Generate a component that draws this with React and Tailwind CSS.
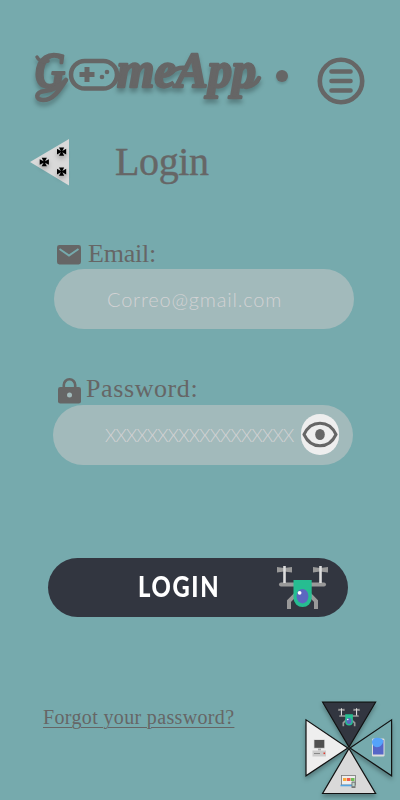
const SERIF = "font-['Liberation_Serif',serif] text-[#666666] whitespace-nowrap";

function Logo() {
  return (
    <svg width="264" height="76" viewBox="30 38 264 76" className="block shrink-0 overflow-visible" fill="#666">
      <g
        className="font-['Liberation_Serif',serif] font-bold italic [filter:drop-shadow(0_4px_2px_rgba(0,0,0,0.25))]"
        stroke="#666"
        strokeWidth="2.400"
        strokeLinejoin="round"
      >
        <text x="35" y="87" fontSize="50" textLength="30" lengthAdjust="spacingAndGlyphs">G</text>
        <text x="117" y="87" fontSize="50" textLength="139" lengthAdjust="spacingAndGlyphs">meApp</text>
        <g fill="none" strokeWidth="4.500" strokeLinecap="round">
          <path d="M66 80C59 91 53 100 43 100 35 100 35 92 45 91 53 90 61 86 66 80" />
          <path d="M37 57Q40 63 48 61" strokeWidth="3.500" />
          <path d="M172 72Q177 67 186 68" />
          <path d="M246 87Q256 85 259 78" />
        </g>
      </g>
      <rect x="71" y="61" width="46" height="27.500" rx="13.750" fill="none" stroke="#666" strokeWidth="4.500" />
      <path d="M84.500 67h5v5h5v5h-5v5h-5v-5h-5v-5h5z" />
      <circle cx="102" cy="77" r="2.300" />
      <circle cx="107" cy="72" r="2.300" />
      <circle cx="282" cy="76" r="6" className="[filter:drop-shadow(0_2px_1px_rgba(0,0,0,0.15))]" />
    </svg>
  );
}

function MenuIcon() {
  return (
    <svg width="48" height="48" viewBox="0 0 48 48" fill="none" stroke="#666" className="block shrink-0">
      <circle cx="24" cy="24" r="21.200" strokeWidth="4.600" />
      <path d="M14.500 14.500h19M14.500 24h19M14.500 33.500h19" strokeWidth="4.600" strokeLinecap="round" />
    </svg>
  );
}

function Cross({ x, y }) {
  return (
    <path
      transform={`translate(${x} ${y})`}
      d="M-2.600-4.200h5.200L.7-.7 4.600-2.800v5.600L.7.7 2.600 4.200h-5.200L-.7.7-4.600 2.800v-5.600L-.7-.7z"
      fill="#000"
    />
  );
}

function BackIcon() {
  return (
    <svg width="40" height="48" viewBox="30 138 40 48" className="block shrink-0 overflow-visible">
      <path d="M30 162 69 139v46.500z" fill="#d9d9d9" />
      <g className="[filter:drop-shadow(0_3px_2px_rgba(0,0,0,0.25))]">
        <Cross x={44.300} y={162} />
        <Cross x={61.600} y={151.600} />
        <Cross x={61.600} y={171.600} />
      </g>
    </svg>
  );
}

function DroneShape() {
  return (
    <g>
      <path d="M296 593 289 600v6M309 593l7 7v6" fill="none" stroke="#999" strokeWidth="4" strokeLinecap="square" />
      <path d="M281 583.500h43" stroke="#999" strokeWidth="4" strokeLinecap="round" />
      <path d="M277 566l7 1 8-1v5.500l-8-1-7 1zM313 566l7 1 8-1v5.500l-8-1-7 1z" fill="#999" />
      <path d="M284.500 565v17M320.500 565v17" stroke="#ddd" strokeWidth="2.600" />
      <path d="M293.500 579h18.200v18a9.100 9.100 0 0 1-18.200 0z" fill="#26bd91" />
      <ellipse cx="302.500" cy="595.200" rx="5.900" ry="7.200" fill="#5c67c0" />
      <circle cx="299.600" cy="591.800" r="1.900" fill="#fff" />
    </g>
  );
}

function NavWheel() {
  return (
    <svg width="96" height="104" viewBox="300 696 96 104" className="block overflow-visible">
      <g stroke="#111" strokeWidth="1.200" className="[filter:drop-shadow(0_3px_2px_rgba(0,0,0,0.28))]">
        <path d="M306 719.800v56L347.800 748z" fill="#eee" />
        <path d="M391.600 719.800v56L350 748z" fill="#76aaad" />
        <path d="M322.600 793.500h53L349 748.500z" fill="#d9d9d9" />
        <path d="M322.600 702.200h53L349 747z" fill="#323640" />
      </g>
      <g transform="translate(349 717.500) scale(.42) translate(-302.500 -587)">
        <DroneShape />
      </g>
      <g>
        <rect x="313.800" y="739.500" width="11" height="9" fill="#ccc" />
        <rect x="314.400" y="740" width="9.800" height="7.800" fill="#505050" />
        <path d="M318 748.500h3v2h-3z" fill="#aaa" />
        <rect x="312.500" y="750.500" width="13.500" height="6" fill="#ccc" />
        <path d="M314 753.500h6" stroke="#888" strokeWidth="1" />
        <rect x="323.500" y="752.500" width="1.600" height="1.600" fill="#e03c31" />
      </g>
      <g>
        <rect x="372" y="738.500" width="12.500" height="18" rx="1.200" fill="#ddd" />
        <rect x="373" y="740" width="10.500" height="14.500" fill="#5666c7" />
        <path d="M372 742C372 737 380 736.500 383 740 384 745 378 749 374.500 746.500 372.500 745 372 744 372 742z" fill="#55a3fb" />
      </g>
      <g>
        <rect x="341.500" y="775.500" width="14" height="9.500" fill="#eee" stroke="#777" strokeWidth=".8" />
        <path d="M343 778h3.500v3H343z" fill="#f8aa3c" />
        <path d="M347 778h3.500v3H347z" fill="#ef5a50" />
        <path d="M351 778h3.500v3H351z" fill="#70bd55" />
        <path d="M340.500 785.500h14" stroke="#52a5e4" strokeWidth="1.600" />
        <rect x="351.500" y="781.500" width="4" height="6.500" rx=".6" fill="#777" />
        <rect x="352.400" y="782.700" width="2.200" height="3.500" fill="#bdd7cd" />
      </g>
    </svg>
  );
}

export default function App() {
  return (
    <main className="flex h-[800px] w-[400px] flex-col overflow-hidden bg-[#76aaad]">
      <header className="flex h-[138px] items-start pt-[38px] pl-[30px]">
        <Logo />
        <button className="mt-[19px] ml-[23px]" aria-label="Menu"><MenuIcon /></button>
      </header>

      <div className="flex h-[100px] items-start pl-[30px]">
        <BackIcon />
        <h1 className={`${SERIF} ml-[45px] text-[40px] leading-[48px] tracking-[-0.4px] [-webkit-text-stroke:0.4px_#666]`}>Login</h1>
      </div>

      <section className="h-[134px]">
        <label className="flex h-[31px] items-center pl-[57px]">
          <svg width="24" height="20" viewBox="0 0 24 20" className="mt-[3px]">
            <rect width="24" height="19.500" rx="2.400" fill="#666" />
            <path d="M2.500 4 12 10.500 21.500 4" fill="none" stroke="#76aaad" strokeWidth="2" />
          </svg>
          <span className={`${SERIF} ml-[7px] text-[26px] leading-[31px] tracking-[-0.2px]`}>Email:</span>
        </label>
        <div className="ml-[54px] flex h-[60px] w-[300px] items-center rounded-full bg-[#a2babb] pl-[53px]">
          <span className="whitespace-nowrap font-['Lato',sans-serif] text-[20px] font-light tracking-[0.8px] text-[#d2d2d4]">Correo@gmail.com</span>
        </div>
      </section>

      <section className="h-[186px]">
        <label className="flex h-[33px] items-center pl-[58px]">
          <svg width="23" height="26" viewBox="0 0 23 26" className="mt-[4px]">
            <path d="M5.800 10V7a5.700 5.700 0 0 1 11.400 0v3" fill="none" stroke="#666" strokeWidth="2.600" />
            <rect y="9" width="23" height="16.500" rx="2.300" fill="#666" />
            <circle cx="11.500" cy="17" r="2.500" fill="#a2babb" />
          </svg>
          <span className={`${SERIF} ml-[5px] text-[26px] leading-[31px] tracking-[0.6px]`}>Password:</span>
        </label>
        <div className="ml-[53px] flex h-[60px] w-[300px] items-center rounded-full bg-[#a2babb] pl-[52px]">
          <span className="w-[196px] whitespace-nowrap font-['Lato',sans-serif] text-[18px] font-light tracking-[-0.75px] text-[#d2d2d4]">XXXXXXXXXXXXXXXXXX</span>
          <button className="mb-[2px] flex h-[41px] w-[38px] items-center justify-center rounded-full bg-[#eee]" aria-label="Show password">
            <svg width="36" height="27" viewBox="0 0 36 27" className="shrink-0" fill="none" stroke="#666">
              <path d="M2 13.500C9-1.500 27-1.500 34 13.500 27 28.500 9 28.500 2 13.500z" strokeWidth="3" />
              <ellipse cx="18" cy="13.500" rx="4.800" ry="5.500" fill="#666" stroke="none" />
            </svg>
          </button>
        </div>
      </section>

      <button className="ml-[48px] flex h-[59px] w-[300px] shrink-0 items-center rounded-full bg-[#323640] pl-[90px]">
        <span className="mb-[4px] inline-block w-[139px] origin-left scale-x-[0.82] text-left font-['Lato',sans-serif] text-[29px] leading-none font-black tracking-[2px] text-white">LOGIN</span>
        <svg width="52" height="46" viewBox="277 564 52 46" className="shrink-0"><DroneShape /></svg>
      </button>

      <footer className="flex h-[183px] items-start justify-between pr-[4px] pl-[43px]">
        <a href="#" className={`${SERIF} mt-[87px] text-[20px] leading-[26px] tracking-[0.35px] underline decoration-1 underline-offset-[3px]`}>Forgot your password?</a>
        <div className="mt-[79px]"><NavWheel /></div>
      </footer>
    </main>
  );
}
